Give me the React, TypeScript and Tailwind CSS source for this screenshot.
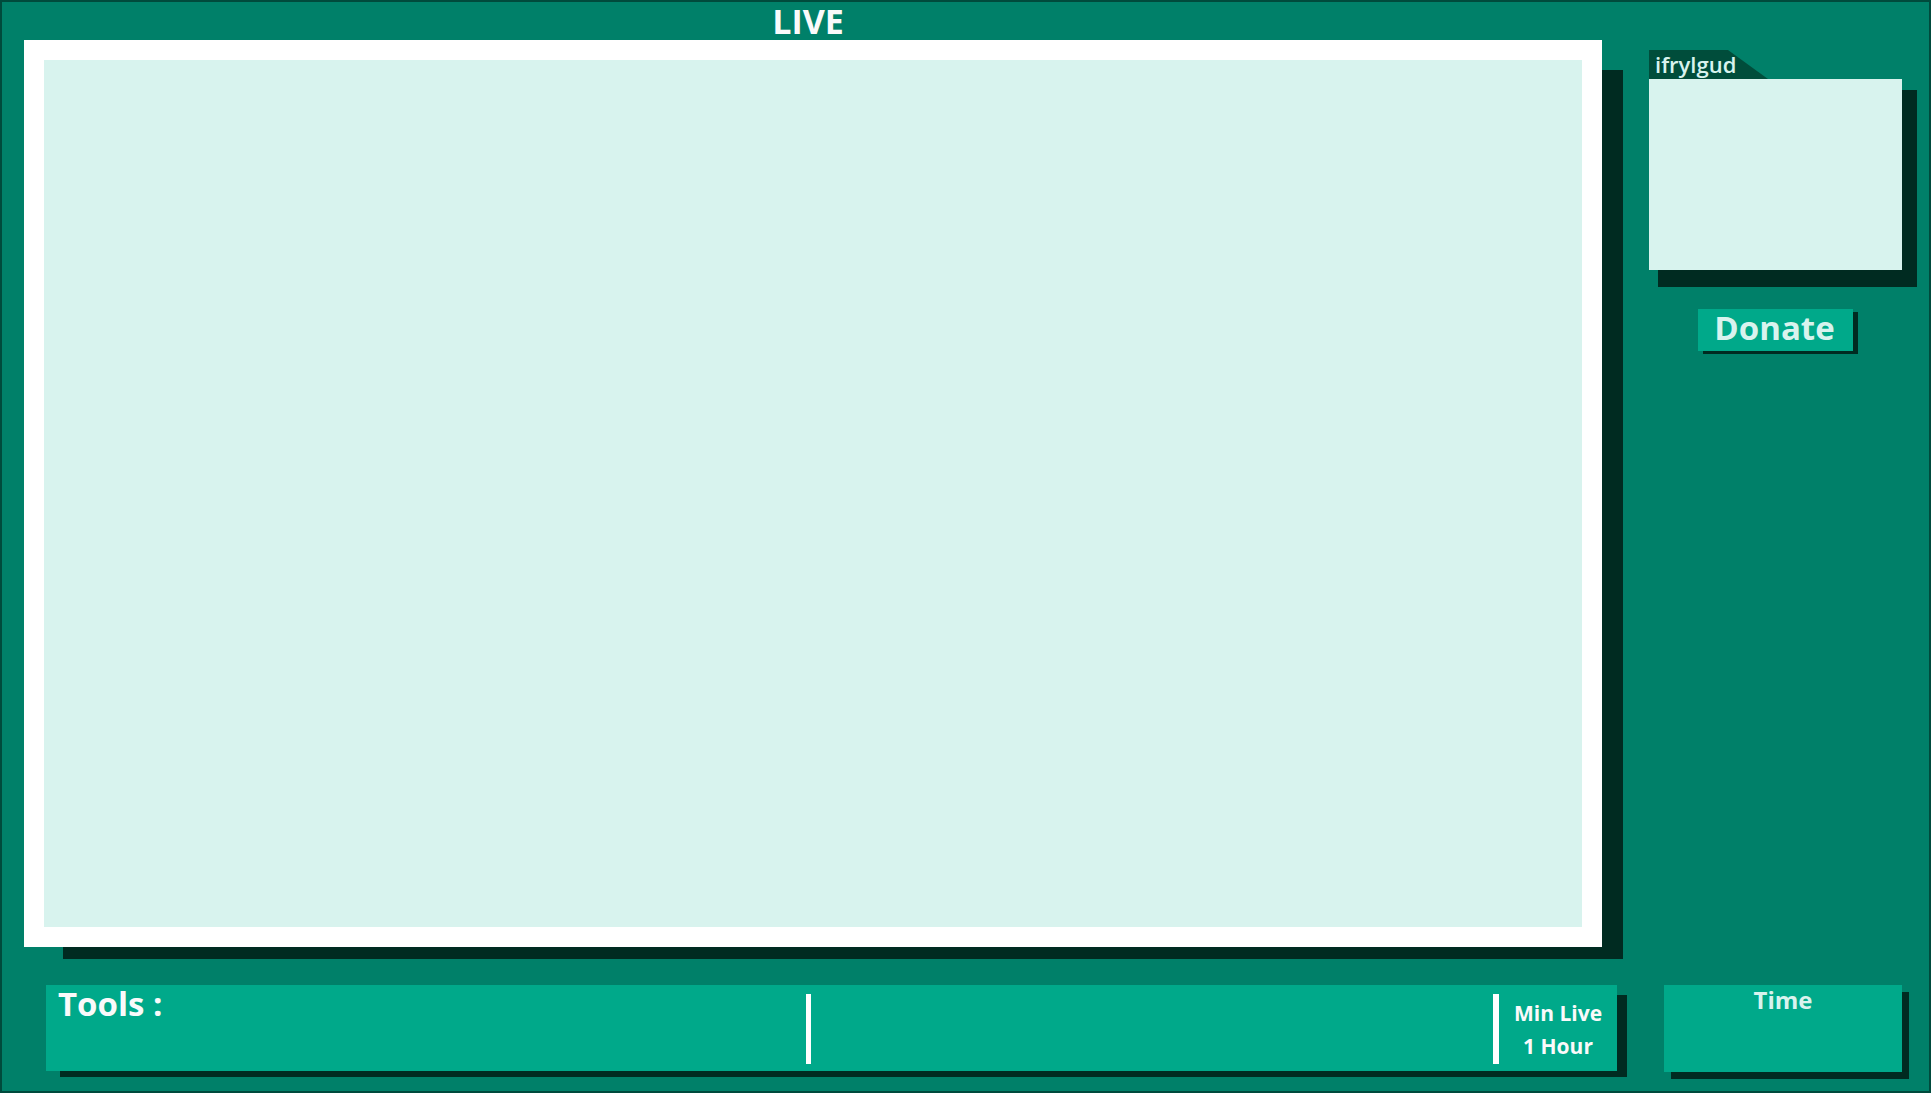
import React from "react"

const font = { fontFamily: '"Open Sans", "Noto Sans", sans-serif' }

// Stream overlay layout: live frame, streamer card, tool bar
export default function App() {
  return (
    <div
      className="w-[1931px] h-[1093px] bg-[#008069] border-2 border-[#004a3c] flex flex-col overflow-hidden"
      style={font}
    >
      {/* Top section */}
      <div className="flex pl-[22px]">
        {/* Live frame column */}
        <div className="w-[1578px] flex flex-col">
          <div className="h-[38px] flex justify-center pr-[10px]">
            <span className="text-[34px] font-bold leading-[38px] text-[#fafafa]">LIVE</span>
          </div>
          <div className="h-[907px] border-[20px] border-white bg-[#d8f3ee] shadow-[30px_21px_0_-9px_#002b21]" />
        </div>

        {/* Streamer card column */}
        <div className="ml-[47px] w-[253px] mt-[48px] flex flex-col">
          <div className="w-[119px] h-[29px] bg-[#004d3b] [clip-path:polygon(0_0,79px_0,100%_100%,0_100%)] pl-[6px]">
            <span className="text-[22px] font-semibold leading-[29px] text-[#d8f3ee]">ifrylgud</span>
          </div>
          <div className="h-[191px] bg-[#d8f3ee] shadow-[12px_14px_0_3px_#002b21]" />
          <div className="flex justify-center mt-[39px]">
            <button className="w-[155px] h-[42px] bg-[#00a98a] shadow-[5px_3px_0_#002b21] text-[33px] font-bold leading-[38px] text-[#d8f3ee] flex justify-center pr-[2px]">
              Donate
            </button>
          </div>
        </div>
      </div>

      {/* Bottom section */}
      <div className="flex mt-[38px]">
        <div className="ml-[44px] w-[1571px] h-[86px] bg-[#00a98a] shadow-[12px_8px_0_-2px_#002b21] flex">
          <div className="w-[760px] pl-[12px] pt-[2px]">
            <span className="text-[33px] font-bold leading-none text-[#fafafa]">Tools :</span>
          </div>
          <div className="w-[5px] h-[70px] mt-[9px] bg-white" />
          <div className="w-[682px]" />
          <div className="w-[6px] h-[70px] mt-[9px] bg-white" />
          <div className="flex-1 flex flex-col items-center pt-[12px] text-[21px] font-bold leading-[33px] text-[#fafafa]">
            <span>Min Live</span>
            <span>1 Hour</span>
          </div>
        </div>

        <div className="ml-[47px] w-[238px] h-[87px] bg-[#00a98a] shadow-[7px_7px_0_#002b21] flex justify-center pt-[3px]">
          <span className="text-[24px] font-bold leading-none text-[#d8f3ee]">Time</span>
        </div>
      </div>
    </div>
  )
}
